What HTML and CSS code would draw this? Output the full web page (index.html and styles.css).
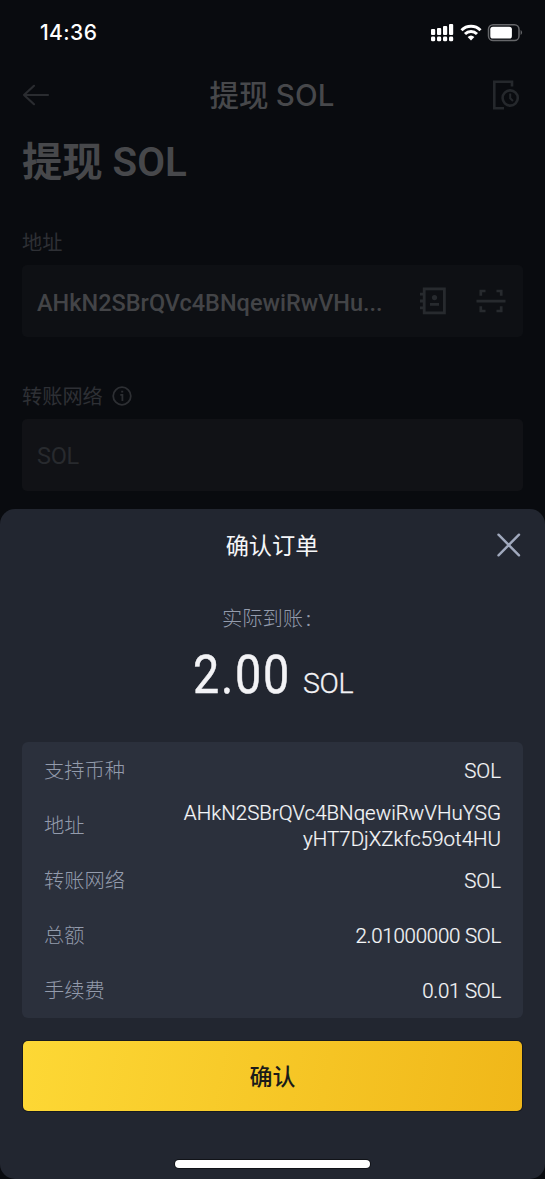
FILE: index.html
```
<!DOCTYPE html>
<html lang="zh-CN">
<head>
<meta charset="utf-8">
<title>提现 SOL</title>
<link rel="stylesheet" href="styles.css">
</head>
<body>
<div class="screen">
  <div class="status">
    <span class="time">14:36</span>
    <svg class="status-icons" width="94" height="20" viewBox="0 0 94 20" fill="#fff">
      <g>
        <rect x="1" y="6" width="4.2" height="6" rx="1"/><rect x="7" y="5" width="4.2" height="7" rx="1"/><rect x="13" y="3" width="4.2" height="9" rx="1"/><rect x="19" y="1" width="4.2" height="11" rx="1"/>
        <rect x="1" y="13.6" width="4.2" height="4.7" rx="1.4"/><rect x="7" y="13.6" width="4.2" height="4.7" rx="1.4"/><rect x="13" y="13.6" width="4.2" height="4.7" rx="1.4"/><rect x="19" y="13.6" width="4.2" height="4.7" rx="1.4"/>
      </g>
      <g fill="none" stroke="#fff" stroke-width="3">
        <path d="M31.5 7.2a13.5 13.5 0 0 1 19 0"/><path d="M35 11a8.6 8.6 0 0 1 12 0"/>
      </g>
      <path d="M37.6 14a5 5 0 0 1 6.8 0L41 17.400z"/>
      <rect x="58.5" y="1.7" width="30.5" height="15.8" rx="4.6" fill="none" stroke="#66676a" stroke-width="1.5"/>
      <rect x="60.3" y="3.7" width="21.6" height="11.8" rx="2.6"/>
      <path d="M90.6 7a2.9 2.9 0 0 1 0 5z" fill="#66676a"/>
    </svg>
  </div>
  <header class="nav">
    <svg class="back" width="28" height="22" viewBox="0 0 28 22" fill="none" stroke="#2a2c30" stroke-width="2.2" stroke-linecap="round" stroke-linejoin="round"><path d="M26 11H2M12 1.8L2 11l10 9.2"/></svg>
    <h2 class="nav-title">提现 <span class="nav-coin">SOL</span></h2>
    <svg class="history" width="28" height="30" viewBox="0 0 28 30" fill="none" stroke="#25282c" stroke-width="2.6"><path d="M20 6.5V1.8H2.3V28.2H12"/><circle cx="18.2" cy="18" r="7.6"/><path d="M18.2 13.5V18.3L21 21" stroke-width="2"/></svg>
  </header>
  <main class="form">
    <h1 class="title">提现 SOL</h1>
    <div class="label">地址</div>
    <div class="field">
      <span class="address">AHkN2SBrQVc4BNqewiRwVHu...</span>
      <svg class="book" width="28" height="28" viewBox="0 0 28 28" fill="none" stroke="#272a2e" stroke-width="2.8"><rect x="5.2" y="1.9" width="20.2" height="24"/><path d="M1 7.2h4M1 14h4M1 20.8h4M11 17.3h9"/><circle cx="15.5" cy="10.6" r="2.6" fill="#272a2e" stroke="none"/></svg>
      <svg class="scan" width="30" height="26" viewBox="0 0 30 26" fill="none" stroke="#272a2e" stroke-width="2.7"><path d="M4.8 7.7V3H9.5M20.5 3h4.7v4.7M4.8 18.3V23H9.5M20.5 23h4.7v-4.7M.5 13.2h29"/></svg>
    </div>
    <div class="label network">转账网络
      <svg class="info" width="20" height="20" viewBox="0 0 20 20" fill="none" stroke="#2d2f33" stroke-width="1.8"><circle cx="10" cy="10" r="8.8"/><path d="M8.3 8.8H10.4v6.2M9.2 5.7h2"/></svg>
    </div>
    <div class="field select">SOL</div>
  </main>
  <section class="sheet">
    <div class="sheet-head">
      <h3 class="sheet-title">确认订单</h3>
      <svg class="close" width="24" height="24" viewBox="0 0 24 24" stroke="#a1a9bd" stroke-width="2.4" stroke-linecap="round"><path d="M1.5 1.7L22 22.3M22 1.7L1.5 22.3"/></svg>
    </div>
    <div class="caption">实际到账<span class="colon">:</span></div>
    <div class="amount"><span class="value">2.00</span><span class="unit">SOL</span></div>
    <dl class="card">
      <div class="row"><dt>支持币种</dt><dd>SOL</dd></div>
      <div class="row"><dt>地址</dt><dd class="wallet">AHkN2SBrQVc4BNqewiRwVHuYSG<br>yHT7DjXZkfc59ot4HU</dd></div>
      <div class="row"><dt>转账网络</dt><dd>SOL</dd></div>
      <div class="row"><dt>总额</dt><dd class="number">2.01000000 SOL</dd></div>
      <div class="row"><dt>手续费</dt><dd class="number">0.01 SOL</dd></div>
    </dl>
    <button class="confirm">确认</button>
    <div class="home"></div>
  </section>
</div>
</body>
</html>
```
FILE: styles.css
```
* { box-sizing: border-box; margin: 0; padding: 0; }
body { background: #000; font-family: Roboto, "Noto Sans CJK SC", sans-serif; }
.screen { position: relative; width: 545px; height: 1179px; background: #090b0f; overflow: hidden; }
.status { display: flex; justify-content: space-between; align-items: center; height: 65px; padding: 0 21px 0 40px; color: #fff; }
.time { padding-top: 1px; font: 500 21px/24px Inter, sans-serif; letter-spacing: .4px; }
.nav { display: flex; align-items: center; justify-content: space-between; height: 60px; padding: 0 25px 0 22px; }
.nav-title { padding-left: 2px; font-size: 29.5px; line-height: 40px; font-weight: 500; color: #47484b; white-space: nowrap; }
.nav-coin { font-family: Inter, sans-serif; font-size: 29.5px; letter-spacing: .1px; }
.form { padding: 0 22px; }
.title { height: 76px; font-size: 40.3px; line-height: 76px; font-weight: 600; color: #47484b; }
.label { height: 32px; margin-top: 26px; margin-bottom: 6px; font-size: 20.2px; line-height: 32px; color: #2e3035; }
.network { display: flex; align-items: center; gap: 9px; margin-top: 44px; }
.info { margin-bottom: 2px; }
.field { display: flex; align-items: center; height: 72px; padding: 0 17px 0 15px; border-radius: 5px; background: #0e1014; }
.address { flex: 1; padding-top: 3px; font-size: 23.5px; font-weight: 500; color: #434447; }
.book { margin-right: 29px; }
.select { padding-top: 2px; background: #111216; font-size: 23.5px; letter-spacing: -.3px; color: #282a2e; }
.sheet { position: absolute; left: 0; right: 0; top: 509px; bottom: 0; padding: 0 22px; border-radius: 15px; background: #222630; }
.sheet-head { display: grid; grid-template-columns: 1fr auto 1fr; align-items: center; height: 72px; padding-right: 2px; }
.sheet-title { grid-column: 2; padding: 1px 0 0 1px; font-size: 23.2px; line-height: 32px; font-weight: 400; color: #f5f6f8; }
.close { justify-self: end; }
.caption { height: 56px; text-align: center; font-size: 20.3px; line-height: 77px; font-weight: 300; color: #939bac; }
.colon { display: inline-block; width: 20px; padding-left: 3px; text-align: left; font-weight: 400; }
.amount { display: flex; justify-content: center; align-items: baseline; height: 105px; color: #f3f3f6; line-height: 76px; }
.value { font-size: 53px; letter-spacing: 2px; transform: translateX(1px) scaleX(.88); transform-origin: left; -webkit-text-stroke: .5px #f3f3f6; }
.unit { font-size: 28.5px; font-weight: 300; letter-spacing: -.3px; -webkit-text-stroke: .3px #f3f3f6; }
.card { height: 276px; padding: 1px 22px 0; border-radius: 6px; background: #2b303c; }
.row { display: flex; justify-content: space-between; align-items: center; height: 55px; }
dt { padding-top: 1px; font-size: 20.3px; line-height: 28px; font-weight: 300; color: #939bac; }
dd { font-size: 20.5px; line-height: 26px; color: #f6f7f9; text-align: right; font-weight: 300; -webkit-text-stroke: .2px #f6f7f9; }
.number { letter-spacing: -.25px; }
.confirm { display: block; width: 499px; height: 70px; margin: 23px auto 0; padding-bottom: 2px; border: 0; border-radius: 5px; background: linear-gradient(100deg, #fdd835, #f0b719); box-shadow: 0 0 0 1px #171a20; font: 500 23px/68px "Noto Sans CJK SC", sans-serif; color: #1a1b1a; }
.home { width: 195px; height: 8px; margin: 49px auto 0; border-radius: 4px; background: #fff; box-shadow: 0 0 0 1px #111318; }
```
